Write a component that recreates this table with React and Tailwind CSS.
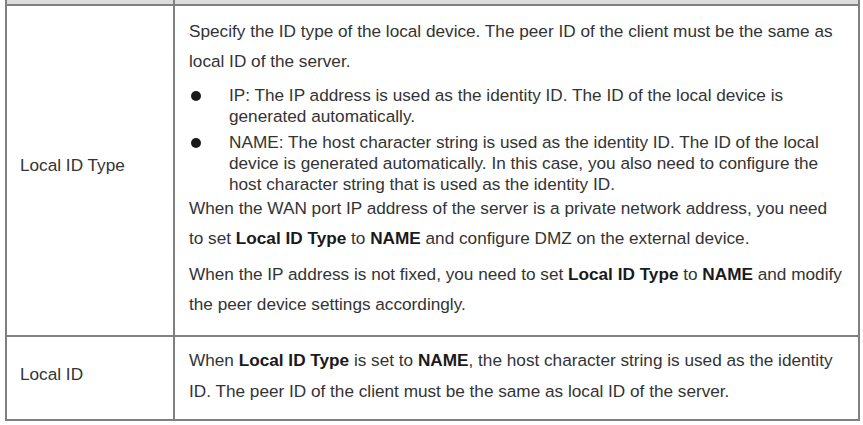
import React from "react";

const B = ({ children }) => <b className="font-bold text-[#1a1a1a]">{children}</b>;

function Bullet({ children }) {
  return (
    <div className="flex leading-[21px]">
      <div className="w-[40px] shrink-0 flex pt-[6px] pl-[2px]">
        <span className="block w-[10px] h-[10px] rounded-full bg-[#1a1a1a]" />
      </div>
      <div>{children}</div>
    </div>
  );
}

export default function App() {
  return (
    <div
      className="w-[863px] h-[425px] bg-white text-[17.2px] text-[#333] overflow-hidden"
      style={{ fontFamily: '"Liberation Sans", Arial, sans-serif' }}
    >
      <div className="ml-[5px] w-[855px] border-x-2 border-b-2 border-[#808080]">
        {/* top band (previous row) */}
        <div className="grid grid-cols-[168px_1fr] h-[6px] bg-[#dcdcdc] border-b-2 border-[#808080]">
          <div className="border-r-2 border-[#808080]" />
          <div />
        </div>

        {/* Local ID Type row */}
        <div className="grid grid-cols-[168px_1fr] h-[331px] border-b-2 border-[#808080]">
          <div className="border-r-2 border-[#808080] flex items-center pl-[13px] pb-[9px]">
            Local ID Type
          </div>
          <div className="pl-[14px] pt-[10px] whitespace-nowrap">
            <p className="leading-[30px]">
              Specify the ID type of the local device. The peer ID of the client must be the same as
              <br />
              local ID of the server.
            </p>
            <div className="mt-[9px] flex flex-col gap-[5px]">
              <Bullet>
                IP: The IP address is used as the identity ID. The ID of the local device is
                <br />
                generated automatically.
              </Bullet>
              <Bullet>
                NAME: The host character string is used as the identity ID. The ID of the local
                <br />
                device is generated automatically. In this case, you also need to configure the
                <br />
                host character string that is used as the identity ID.
              </Bullet>
            </div>
            <p className="leading-[30px] -mt-[2px]">
              When the WAN port IP address of the server is a private network address, you need
              <br />
              to set <B>Local ID Type</B> to <B>NAME</B> and configure DMZ on the external device.
            </p>
            <p className="leading-[30px] mt-[6px]">
              When the IP address is not fixed, you need to set <B>Local ID Type</B> to <B>NAME</B> and modify
              <br />
              the peer device settings accordingly.
            </p>
          </div>
        </div>

        {/* Local ID row */}
        <div className="grid grid-cols-[168px_1fr] h-[82px]">
          <div className="border-r-2 border-[#808080] flex items-center pl-[13px] pb-[7px]">
            Local ID
          </div>
          <div className="pl-[14px] pt-[8px] whitespace-nowrap leading-[31px]">
            When <B>Local ID Type</B> is set to <B>NAME</B>, the host character string is used as the identity
            <br />
            ID. The peer ID of the client must be the same as local ID of the server.
          </div>
        </div>
      </div>
    </div>
  );
}
